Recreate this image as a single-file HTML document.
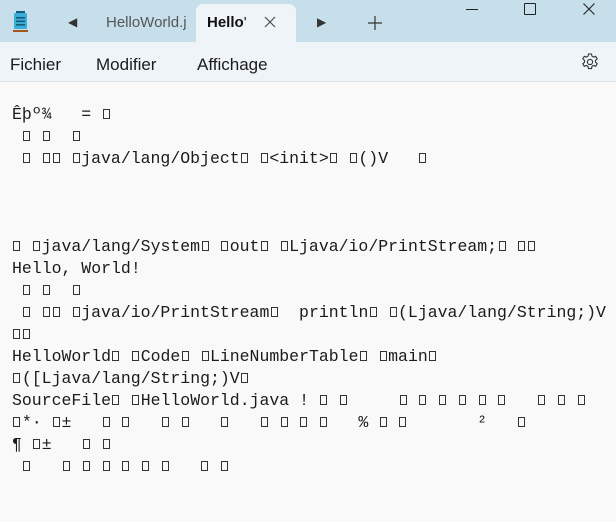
<!DOCTYPE html>
<html><head><meta charset="utf-8"><style>
*{margin:0;padding:0;box-sizing:border-box}
body{width:616px;height:522px;overflow:hidden;background:#f9f9f9;font-family:"Liberation Sans",sans-serif;position:relative}
.top{position:absolute;left:0;top:0;width:616px;height:42px;background:#c7dfea}
.tab{position:absolute;left:196px;top:4px;width:100px;height:40px;background:#eef4f8;border-radius:7px 7px 0 0}
.menu{position:absolute;left:0;top:42px;width:616px;height:40px;background:#eef4f8;border-bottom:1px solid #e0e4e7}
.t{position:absolute;font-size:15px;color:#555;top:14px}
.m{position:absolute;top:55px;font-size:17px;color:#1b1b1b}
pre{position:absolute;left:12px;top:104px;font-family:"Liberation Mono",monospace;font-size:16.5px;line-height:22px;color:#1b1b1b}
i{display:inline-block;width:7px;height:10px;border:1px solid #333;margin:0 1.45px;vertical-align:0}
</style></head><body>
<div class="top"></div>
<div class="tab"></div>
<svg style="position:absolute;left:13px;top:11px" width="16" height="22"><rect x="1" y="2" width="13" height="16" rx="1" fill="#3aaed8"/><rect x="3" y="6" width="9" height="1.6" fill="#155b7a"/><rect x="3" y="9.5" width="9" height="1.6" fill="#155b7a"/><rect x="3" y="13" width="9" height="1.6" fill="#155b7a"/><rect x="0" y="19" width="15" height="2" fill="#a4561f"/><rect x="3" y="0" width="9" height="2" fill="#155b7a"/></svg>
<div class="t" style="left:68px;font-size:12px;color:#333;top:15px">◀</div>
<div class="t" style="left:106px">HelloWorld.j</div>
<div class="t" style="left:207px;color:#111;font-weight:bold">Hello<span style="font-weight:normal">'</span></div>
<svg style="position:absolute;left:264px;top:16px" width="12" height="12"><path d="M1 1L11 11M11 1L1 11" stroke="#444" stroke-width="1.1"/></svg>
<div class="t" style="left:317px;font-size:12px;color:#333;top:15px">▶</div>
<svg style="position:absolute;left:368px;top:16px" width="14" height="14"><path d="M7 0V14M0 7H14" stroke="#333" stroke-width="1.2"/></svg>
<div style="position:absolute;left:466px;top:9px;width:12px;height:1px;background:#222"></div>
<div style="position:absolute;left:524px;top:3px;width:12px;height:12px;border:1px solid #222;border-radius:1px"></div>
<svg style="position:absolute;left:583px;top:3px" width="12" height="12"><path d="M0.5 0.5L11.5 11.5M11.5 0.5L0.5 11.5" stroke="#222" stroke-width="1.1"/></svg>
<div class="menu"></div>
<div class="m" style="left:10px">Fichier</div>
<div class="m" style="left:96px">Modifier</div>
<div class="m" style="left:197px">Affichage</div>
<svg style="position:absolute;left:580px;top:52px" width="20" height="20" viewBox="0 0 20 20"><path d="M8.5 2h3l.5 2.2 1.6.9 2.1-.8 1.5 2.6-1.7 1.5v1.8l1.7 1.5-1.5 2.6-2.1-.8-1.6.9-.5 2.2h-3l-.5-2.2-1.6-.9-2.1.8-1.5-2.6 1.7-1.500V8.4L2.8 6.9l1.5-2.6 2.1.8 1.6-.9z" fill="none" stroke="#333" stroke-width="1.1"/><circle cx="10" cy="10" r="2.6" fill="none" stroke="#333" stroke-width="1.1"/></svg>
<pre>Êþº¾   = <i></i>
 <i></i> <i></i>  <i></i>
 <i></i> <i></i><i></i> <i></i>java/lang/Object<i></i> <i></i>&lt;init&gt;<i></i> <i></i>()V   <i></i>



<i></i> <i></i>java/lang/System<i></i> <i></i>out<i></i> <i></i>Ljava/io/PrintStream;<i></i> <i></i><i></i>
Hello, World!
 <i></i> <i></i>  <i></i>
 <i></i> <i></i><i></i> <i></i>java/io/PrintStream<i></i>  println<i></i> <i></i>(Ljava/lang/String;)V
<i></i><i></i>
HelloWorld<i></i> <i></i>Code<i></i> <i></i>LineNumberTable<i></i> <i></i>main<i></i>
<i></i>([Ljava/lang/String;)V<i></i>
SourceFile<i></i> <i></i>HelloWorld.java ! <i></i> <i></i>     <i></i> <i></i> <i></i> <i></i> <i></i> <i></i>   <i></i> <i></i> <i></i>
<i></i>*· <i></i>±   <i></i> <i></i>   <i></i> <i></i>   <i></i>   <i></i> <i></i> <i></i> <i></i>   % <i></i> <i></i>       ²   <i></i>
¶ <i></i>±   <i></i> <i></i>
 <i></i>   <i></i> <i></i> <i></i> <i></i> <i></i> <i></i>   <i></i> <i></i></pre>
</body></html>
